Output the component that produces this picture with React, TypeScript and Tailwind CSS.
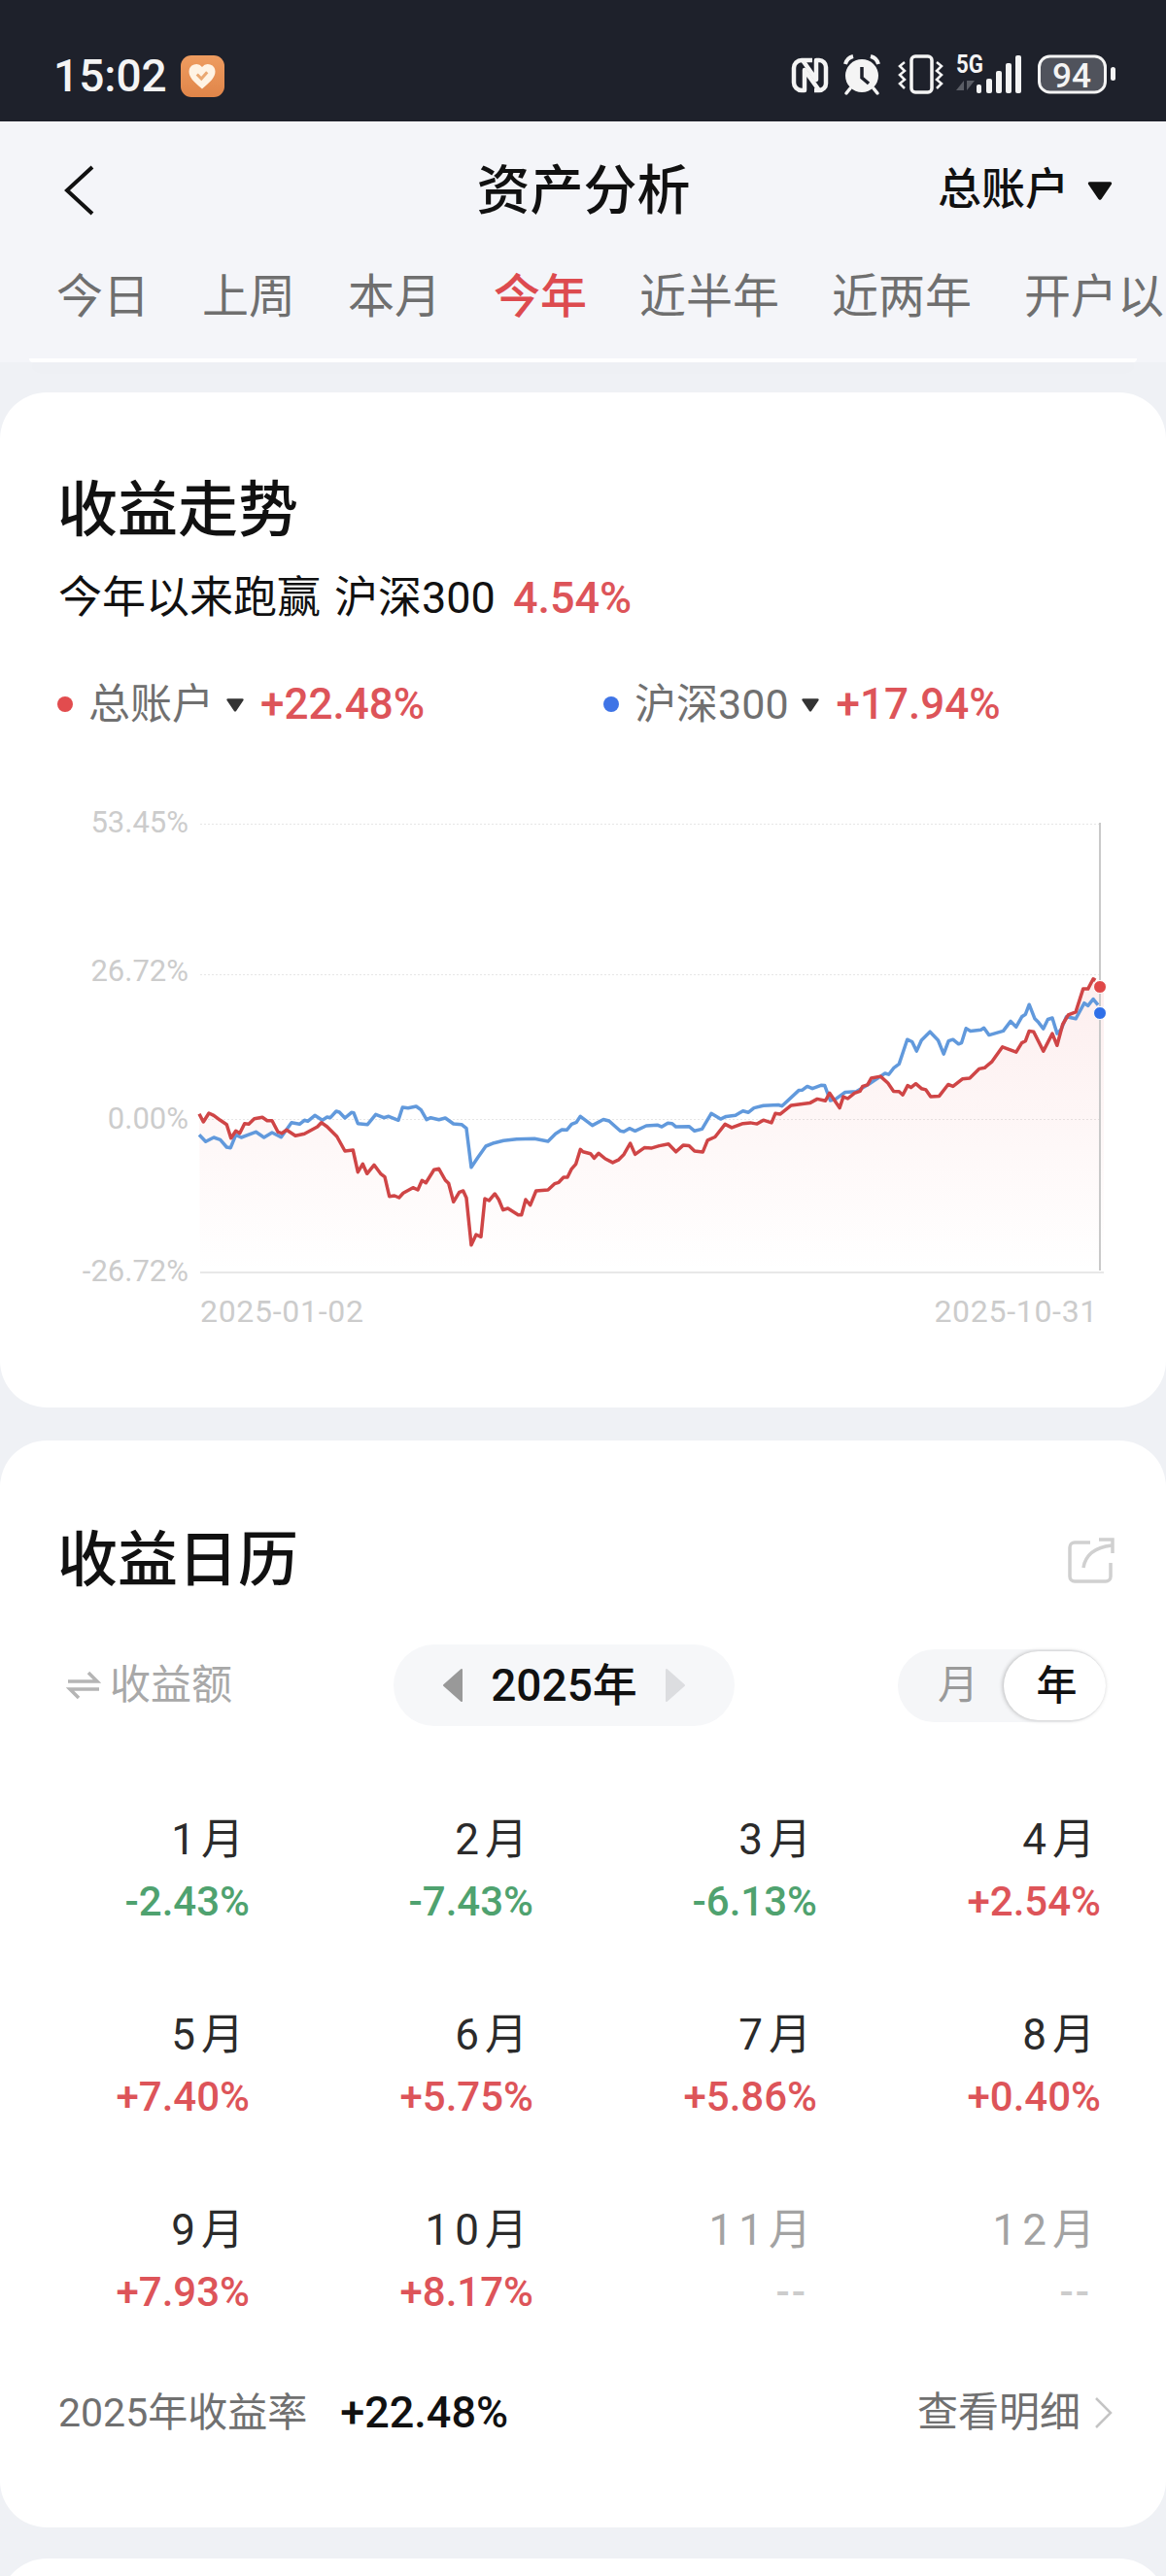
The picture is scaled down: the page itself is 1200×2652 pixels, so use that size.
const z4 = (a: number[]) => { const o: string[] = []; for (let i = 0; i < a.length; i += 2) o.push(`${(100 + a[i] / 3).toFixed(1)},${(980 + a[i + 1] / 3).toFixed(1)}`); return o; };
const z3 = (a: number[]) => { const o: string[] = []; for (let i = 0; i < a.length; i += 2) o.push(`${(600 + a[i] / 2.613).toFixed(1)},${(800 + a[i + 1] / 2.613).toFixed(1)}`); return o; };

const red = [
  ...z4([315,500,328,525,345,498,360,505,380,520,400,533,413,575,428,553,440,560,455,530,468,532,485,515,510,511,525,521,540,521,558,556,570,560,585,550,612,568,640,562,680,540,692,527,710,540,740,570,765,615,790,612,805,680,820,655,833,685,855,658,875,685,888,695,902,755,918,753,932,759,945,745,975,728,990,735,1003,706,1015,713,1040,673,1055,670,1075,705,1085,715,1100,772,1118,742,1130,738,1140,760,1155,905,1170,873,1185,880,1197,762,1210,768,1228,747,1240,765,1253,797,1268,792,1300,812,1310,812,1323,765,1337,782,1355,738,1392,735,1412,716,1425,712,1440,696,1452,696,1465,670,1478,655,1492,610]),
  ...z3([0,1008,20,1013,30,1025,42,1012,60,1027,80,1037,95,1030,110,1015,127,985,140,1015,165,997,185,998,205,992,230,987,250,1008,270,990,285,992,300,1006,322,1009,335,977,355,968,382,934,400,943,430,932,450,930,468,933,485,923,507,930,517,905,530,907,560,883,610,877,630,866,652,871,663,850,690,890,700,860,712,865,730,850,745,845,752,832,765,828,775,810,800,805,820,823,835,845,850,846,860,855,873,830,882,835,895,825,910,838,922,841,935,860,958,858,982,827,995,832,1020,812,1040,810,1065,785,1080,782,1100,765,1128,726,1165,740,1180,715,1190,710,1200,683,1212,685,1238,737,1262,690,1275,722,1290,665,1305,640,1325,632,1345,570,1358,570,1372,543,1378,547]),
];
const blue = [
  ...z4([315,565,335,586,360,573,380,580,400,603,412,605,428,565,445,573,490,556,515,573,540,558,568,572,600,527,625,532,640,520,650,523,672,505,695,520,710,510,720,512,738,492,748,495,765,513,785,496,792,497,805,530,835,533,860,502,885,512,900,508,930,520,943,480,960,482,985,477,1000,488,1017,518,1030,512,1055,518,1075,513,1100,531,1125,533,1140,545,1155,665,1175,635,1200,600,1225,590,1255,583,1295,578,1350,577,1392,585,1415,562,1435,549,1450,550,1465,532,1480,526,1492,508]),
  ...z3([0,918,25,937,55,921,70,925,100,952,110,954,125,945,140,952,170,938,200,936,212,941,228,931,240,932,250,941,285,940,300,952,320,947,345,905,370,920,385,913,410,910,430,898,445,902,460,890,485,884,525,882,535,885,580,843,590,842,603,832,617,838,640,829,650,830,665,870,680,866,705,848,735,846,770,825,800,805,812,797,822,800,835,783,850,772,872,706,885,712,897,737,910,708,933,685,955,708,970,745,983,710,995,706,1010,718,1018,715,1030,676,1042,683,1070,680,1078,675,1092,694,1130,683,1150,657,1165,672,1180,645,1190,638,1200,612,1215,650,1225,660,1238,677,1250,652,1262,648,1275,690,1285,680,1300,645,1325,650,1348,608,1358,615,1372,597,1385,613]),
];

const font = { fontFamily: '"Roboto","Noto Sans CJK SC",sans-serif' };

function StatusIcons() {
  return (
    <svg width="340" height="60" viewBox="810 44 340 60" className="-mt-[10px] block">
      {/* NFC */}
      <path d="M836 62h-11a8 8 0 0 0-8 8v15a8 8 0 0 0 8 8h3V72l15 21" fill="none" stroke="#f4f4f4" strokeWidth="4.5" strokeLinejoin="round" />
      <path d="M831 93h0M826 62l14 20V62h3a7 7 0 0 1 7 7v17a7 7 0 0 1-7 7h-5" fill="none" stroke="#f4f4f4" strokeWidth="4.5" strokeLinejoin="round" />
      {/* alarm */}
      <circle cx="887" cy="78" r="17" fill="#f4f4f4" />
      <path d="M870 66c1-4 4-7 8-8M904 66c-1-4-4-7-8-8" fill="none" stroke="#f4f4f4" strokeWidth="4" />
      <path d="M875 91l-4 5M899 91l4 5" fill="none" stroke="#f4f4f4" strokeWidth="3.5" strokeLinecap="round" />
      <path d="M887 69v11l7 6" fill="none" stroke="#1e212b" strokeWidth="3.5" />
      {/* vibrate */}
      <rect x="938" y="58" width="21" height="37" rx="4" fill="none" stroke="#f4f4f4" strokeWidth="3.5" />
      <path d="M931 64l-5 4 5 5-5 4 5 5-5 4 5 5M964 64l5 4-5 5 5 4-5 5 5 4-5 5" fill="none" stroke="#f4f4f4" strokeWidth="2.5" />
      {/* 5G */}
      <text x="984" y="75" fontSize="25" fontWeight="700" fill="#f4f4f4" fontFamily="Roboto" textLength="28" lengthAdjust="spacingAndGlyphs">5G</text>
      <path d="M992 83v10l-8-0zM995 93V83l8 0z" fill="#5b5e66" />
      {/* bars */}
      <rect x="1005" y="87" width="5" height="9" rx="2" fill="#f4f4f4" />
      <rect x="1015" y="81" width="6" height="15" rx="2" fill="#f4f4f4" />
      <rect x="1025" y="73" width="6" height="23" rx="2" fill="#f4f4f4" />
      <rect x="1035" y="65" width="6" height="31" rx="2" fill="#f4f4f4" />
      <rect x="1045" y="57" width="6" height="39" rx="2" fill="#f4f4f4" />
      {/* battery */}
      <rect x="1070" y="58.5" width="67" height="36" rx="11" fill="#50535c" />
      <rect x="1069.5" y="58" width="68" height="37" rx="11" fill="none" stroke="#f4f4f4" strokeWidth="3" />
      <rect x="1143" y="69" width="5" height="14" rx="2.5" fill="#f4f4f4" />
      <text x="1083" y="90" fontSize="35" fontWeight="500" fill="#f4f4f4" fontFamily="Roboto" textLength="40" lengthAdjust="spacingAndGlyphs">94</text>
    </svg>
  );
}

function Tri({ className }: { className: string }) {
  return (
    <svg viewBox="0 0 24 20" className={className}>
      <path d="M3 2.5h18c1.2 0 1.8 1.2 1.2 2.2L13.3 17.8c-.6.9-2 .9-2.6 0L1.8 4.7C1.2 3.7 1.8 2.5 3 2.5z" fill="currentColor" />
    </svg>
  );
}

const months: [string, string, string][] = [
  ['1月', '-2.43%', 'g'], ['2月', '-7.43%', 'g'], ['3月', '-6.13%', 'g'], ['4月', '+2.54%', 'r'],
  ['5月', '+7.40%', 'r'], ['6月', '+5.75%', 'r'], ['7月', '+5.86%', 'r'], ['8月', '+0.40%', 'r'],
  ['9月', '+7.93%', 'r'], ['10月', '+8.17%', 'r'], ['11月', '--', 'n'], ['12月', '--', 'n'],
];

function Chart() {
  const labels: [string, string][] = [
    ['53.45%', 'top-[9px]'], ['26.72%', 'top-[162px]'], ['0.00%', 'top-[314px]'], ['-26.72%', 'top-[471px]'],
  ];
  const area = `M${red[0]} L${red.join(' L')} L1136,1016 L1136,1310 L206,1310 Z`;
  return (
    <div className="relative mt-[67px] h-[560px]">
      <svg width="1200" height="560" viewBox="0 820 1200 560" className="absolute left-0 top-0">
        <defs>
          <linearGradient id="a" gradientUnits="userSpaceOnUse" x1="0" y1="1010" x2="0" y2="1310">
            <stop offset="0" stopColor="#e54848" stopOpacity="0.09" />
            <stop offset="1" stopColor="#e54848" stopOpacity="0" />
          </linearGradient>
        </defs>
        {[848.5, 1003.5, 1152.5].map((y) => (
          <line key={y} x1="206" x2="1132" y1={y} y2={y} stroke="#e6e6e6" strokeWidth="1" strokeDasharray="2 2" />
        ))}
        <path d={area} fill="url(#a)" />
        <line x1="206" x2="1136" y1="1310" y2="1310" stroke="#e8e8e8" strokeWidth="2" />
        <line x1="1132" x2="1132" y1="847" y2="1308" stroke="#c9c9c9" strokeWidth="2" />
        <polyline points={blue.join(' ')} fill="none" stroke="#6199dc" strokeWidth="3.5" strokeLinejoin="round" />
        <polyline points={red.join(' ')} fill="none" stroke="#cf4546" strokeWidth="3.5" strokeLinejoin="round" />
        <circle cx="1132" cy="1016" r="6.5" fill="#e04848" stroke="#fff" strokeWidth="1" />
        <circle cx="1132" cy="1043" r="6.5" fill="#2f6fe8" stroke="#fff" strokeWidth="1" />
      </svg>
      {labels.map(([t, c]) => (
        <span key={t} className={`absolute right-[1006px] ${c} text-[31px] leading-[36px] text-[#cccccc]`}>{t}</span>
      ))}
      <span className="absolute left-[206px] top-[512px] text-[32px] leading-[36px] tracking-[0.7px] text-[#cccccc]">2025-01-02</span>
      <span className="absolute right-[70px] top-[512px] text-[32px] leading-[36px] tracking-[0.7px] text-[#cccccc]">2025-10-31</span>
    </div>
  );
}

export default function App() {
  return (
    <div className="h-[2652px] w-[1200px] overflow-hidden bg-[#eff1f5]" style={font}>
      <div className="flex h-[125px] items-start justify-between bg-[#1e212b] pl-[55px] pr-[50px] pt-[54px]">
        <div className="flex items-center gap-[14px]">
          <span className="text-[46px] font-medium leading-[48px] text-[#f4f4f4]">15:02</span>
          <span className="flex h-[43px] w-[45px] items-center justify-center rounded-[11px] bg-gradient-to-b from-[#ee9c60] to-[#e08549]">
            <svg viewBox="0 0 24 24" className="h-[36px] w-[36px]">
              <path d="M12 21C6 16 3 13 3 9a5 5 0 0 1 9-3 5 5 0 0 1 9 3c0 4-3 7-9 12z" fill="#fff3e4" />
              <path d="M8.5 11l3 3 4-4.5" fill="none" stroke="#eaa872" strokeWidth="2" />
            </svg>
          </span>
        </div>
        <StatusIcons />
      </div>
      <div className="bg-[#f4f5f9]">
        <div className="box-content grid h-[84px] grid-cols-[1fr_auto_1fr] items-center pl-[55px] pr-[54px] pt-[29px]">
          <svg width="32" height="52" viewBox="0 0 32 52" className="ml-[10px]">
            <path d="M30 2 4 26l26 24" fill="none" stroke="#111" strokeWidth="4" />
          </svg>
          <span className="text-[55px] font-medium leading-[70px] text-[#111111]">资产分析</span>
          <div className="flex items-center justify-end gap-[18px]">
            <span className="text-[45px] font-medium leading-[56px] text-[#111111]">总账户</span>
            <Tri className="h-[24px] w-[28px] text-[#111111]" />
          </div>
        </div>
        <div className="mt-[38px] flex gap-[54px] overflow-hidden whitespace-nowrap pl-[58px] text-[48px] leading-[60px] text-[#6f6f6f]">
          <span>今日</span><span>上周</span><span>本月</span>
          <span className="font-medium text-[#dd4b4f]">今年</span>
          <span>近半年</span><span>近两年</span><span>开户以</span>
        </div>
        <div className="mx-[30px] mt-[33px] h-[4px] rounded-b-[12px] bg-white shadow-[0_6px_16px_rgba(0,0,0,0.03)]" />
      </div>
      <div className="mt-[31px] h-[1045px] rounded-[48px] bg-white pt-[86px]">
        <div className="pl-[59px] text-[62px] font-medium leading-[72px] text-[#111111]">收益走势</div>
        <div className="mt-[26px] flex items-center pl-[60px] text-[45px] leading-[56px] text-[#111111]">
          <span>今年以来跑赢</span>
          <span className="ml-[14px]">沪深300</span>
          <span className="ml-[18px] font-medium text-[#dd5459]">4.54%</span>
        </div>
        <div className="mt-[53px] flex items-center pl-[59px] leading-[56px]">
          <span className="h-[16px] w-[16px] rounded-full bg-[#e24c4e]" />
          <span className="ml-[16px] text-[43px] text-[#707070]">总账户</span>
          <Tri className="ml-[12px] h-[17px] w-[20px] text-[#333333]" />
          <span className="ml-[16px] text-[44px] font-medium text-[#dd5459]">+22.48%</span>
          <span className="ml-[184px] h-[16px] w-[16px] rounded-full bg-[#3f74e6]" />
          <span className="ml-[16px] text-[43px] text-[#707070]">沪深300</span>
          <Tri className="ml-[12px] h-[17px] w-[20px] text-[#333333]" />
          <span className="ml-[17px] text-[44px] font-medium text-[#dd5459]">+17.94%</span>
        </div>
        <Chart />
      </div>
      <div className="mt-[34px] h-[1119px] rounded-[48px] bg-white pt-[88px]">
        <div className="flex items-center justify-between pl-[59px] pr-[52px]">
          <span className="text-[62px] font-medium leading-[72px] text-[#111111]">收益日历</span>
          <svg width="50" height="48" viewBox="0 0 50 48" fill="none" stroke="#d0d0d0" strokeWidth="3.5">
            <path d="M24 5H8a5 5 0 0 0-5 5v30a5 5 0 0 0 5 5h32a5 5 0 0 0 5-5V26" />
            <path d="M17 31c2-13 12-21 29-23M33 2h14v14" />
          </svg>
        </div>
        <div className="mt-[50px] grid h-[84px] grid-cols-[345px_351px_auto] items-center pl-[60px]">
          <div className="flex items-center gap-[9px] pl-[8px] text-[42px] leading-[56px] text-[#a8a8a8]">
            <svg width="36" height="30" viewBox="0 0 36 30" fill="none" stroke="#b5b5b5" strokeWidth="3.5">
              <path d="M2 11H32L23 2M34 19H4l9 9" />
            </svg>
            <span>收益额</span>
          </div>
          <div className="flex h-[84px] items-center justify-between rounded-[42px] bg-[#f6f7f9] px-[50px]">
            <svg width="22" height="36" viewBox="0 0 22 36"><path d="M20 2 2 18l18 16z" fill="#999999" stroke="#999999" strokeWidth="2" strokeLinejoin="round" /></svg>
            <span className="text-[46px] font-medium leading-[56px] text-[#111111]">2025年</span>
            <svg width="22" height="36" viewBox="0 0 22 36"><path d="M2 2l18 16L2 34z" fill="#dcdde0" stroke="#dcdde0" strokeWidth="2" strokeLinejoin="round" /></svg>
          </div>
          <div className="ml-[168px] flex h-[75px] w-[214px] items-center justify-between rounded-[38px] bg-[#f5f6f8] pl-[41px]">
            <span className="text-[42px] leading-[56px] text-[#9a9a9a]">月</span>
            <span className="flex h-[71px] w-[105px] items-center justify-center rounded-[36px] bg-white pl-[4px] text-[42px] font-medium text-[#111111] shadow-[-1px_0_4px_rgba(0,0,0,0.25)]">年</span>
          </div>
        </div>
        <div className="mt-[89px] grid grid-cols-[197px_292px_292px_292px] gap-y-[81px] pl-[60px]">
          {months.map(([m, v, k]) => (
            <div key={m} className="flex flex-col items-end gap-[8px]">
              <span className={`text-[44px] leading-[56px] tracking-[6px] ${k === 'n' ? 'text-[#a3a3a3]' : 'text-[#2b2b2b]'}`}>{m}</span>
              <span className={`text-[42px] font-medium leading-[56px] ${k === 'g' ? 'text-[#4fa26f]' : k === 'r' ? 'text-[#dd5459]' : 'pr-[10px] tracking-[2px] text-[#cccccc]'}`}>{v}</span>
            </div>
          ))}
        </div>
        <div className="mt-[68px] flex items-center justify-between pl-[60px] pr-[54px] leading-[56px]">
          <div className="flex items-center gap-[34px]">
            <span className="text-[41px] text-[#707070]">2025年收益率</span>
            <span className="text-[45px] font-medium text-[#111111]">+22.48%</span>
          </div>
          <div className="flex items-center gap-[14px]">
            <span className="text-[42px] text-[#707070]">查看明细</span>
            <svg width="20" height="34" viewBox="0 0 20 34"><path d="M2 2l15 15L2 32" fill="none" stroke="#c4c4c4" strokeWidth="2.5" /></svg>
          </div>
        </div>
      </div>
      <div className="mt-[32px] h-[100px] rounded-[48px] bg-white" />
    </div>
  );
}
